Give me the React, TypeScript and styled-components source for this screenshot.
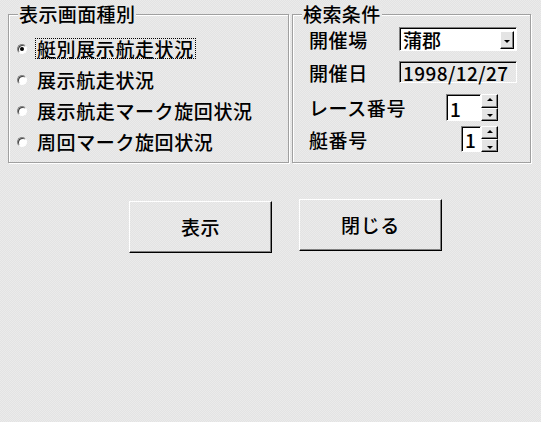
import styled, { createGlobalStyle, css } from 'styled-components';

/**
 * 展示航走状況 表示条件ダイアログ
 */
const GlobalStyle = createGlobalStyle`
  html, body {
    margin: 0;
    padding: 0;
  }

  body {
    font-family: "Noto Sans CJK JP", "DejaVu Sans", sans-serif;
    color: #000;
  }
`;

const bevelRaised = css`
  border: 1px solid;
  border-color: #fff #000 #000 #fff;
  box-shadow: inset -1px -1px 0 #808080;
`;

const bevelSunken = css`
  border: 1px solid;
  border-color: #808080 #fff #fff #808080;
  box-shadow: inset 1px 1px 0 #000;
`;

const DISPLAY_TYPES = ['艇別展示航走状況', '展示航走状況', '展示航走マーク旋回状況', '周回マーク旋回状況'];

const App = () => {
  return (
    <>
      <GlobalStyle />
      <Dialog>
        <TopRow>
          <GroupBox $width={281}>
            <GroupTitle>表示画面種別</GroupTitle>
            <RadioList>
              {DISPLAY_TYPES.map((label, i) => (
                <RadioRow key={label}>
                  <RadioMark $checked={i === 0} />
                  <RadioLabel $focused={i === 0}>{label}</RadioLabel>
                </RadioRow>
              ))}
            </RadioList>
          </GroupBox>

          <GroupBox $width={239}>
            <GroupTitle>検索条件</GroupTitle>
            <FieldList>
              <FieldRow $height={24} $gap={10}>
                <FieldLabel>開催場</FieldLabel>
                <ComboBox>
                  <ComboText>蒲郡</ComboText>
                  <ComboButton>
                    <ArrowDown />
                  </ComboButton>
                </ComboBox>
              </FieldRow>

              <FieldRow $height={22} $gap={11}>
                <FieldLabel>開催日</FieldLabel>
                <ReadOnlyField>1998/12/27</ReadOnlyField>
              </FieldRow>

              <FieldRow $height={27} $gap={5}>
                <FieldLabel>レース番号</FieldLabel>
                <Spinner>
                  <SpinText $width={35}>1</SpinText>
                  <SpinButtons>
                    <SpinButton>
                      <ArrowUp />
                    </SpinButton>
                    <SpinButton>
                      <ArrowDown />
                    </SpinButton>
                  </SpinButtons>
                </Spinner>
              </FieldRow>

              <FieldRow $height={26} $gap={0}>
                <FieldLabel>艇番号</FieldLabel>
                <Spinner>
                  <SpinText $width={20}>1</SpinText>
                  <SpinButtons>
                    <SpinButton>
                      <ArrowUp />
                    </SpinButton>
                    <SpinButton>
                      <ArrowDown />
                    </SpinButton>
                  </SpinButtons>
                </Spinner>
              </FieldRow>
            </FieldList>
          </GroupBox>
        </TopRow>

        <ButtonRow>
          <PushButton>表示</PushButton>
          <PushButton $offset={-2}>閉じる</PushButton>
        </ButtonRow>
      </Dialog>
    </>
  );
};

const Dialog = styled.div`
  width: 541px;
  height: 422px;
  box-sizing: border-box;
  padding: 14px 0 0 8px;
  background: repeating-conic-gradient(#e3e3e3 0 25%, #ebebeb 0 50%) 0 0 / 2px 2px;
  font-size: 19px;
  font-weight: 500;
  line-height: 1;
  overflow: hidden;
`;

const TopRow = styled.div`
  display: flex;
  gap: 3px;
`;

const GroupBox = styled.div<{ $width: number }>`
  position: relative;
  box-sizing: border-box;
  width: ${({ $width }) => $width}px;
  height: 149px;
  border: 1px solid #a0a0a0;
  box-shadow: inset 1px 1px 0 #fff, 1px 1px 0 #fff;
`;

const GroupTitle = styled.span`
  position: absolute;
  top: -11px;
  left: 9px;
  padding: 0 1px;
  background: #e8e8e8;
  letter-spacing: 0.4px;
`;

const RadioList = styled.div`
  display: flex;
  flex-direction: column;
  padding: 18px 0 0 8px;
`;

const RadioRow = styled.div`
  display: flex;
  align-items: center;
  height: 31px;
`;

const RadioMark = styled.span<{ $checked: boolean }>`
  position: relative;
  box-sizing: border-box;
  flex-shrink: 0;
  width: 10px;
  height: 10px;
  border-radius: 50%;
  border: 1px solid;
  border-color: #808080 #fff #fff #808080;
  background: #fff;
  box-shadow: inset 1px 1px 0 #404040;

  ${({ $checked }) =>
    $checked &&
    css`
      &::after {
        content: '';
        position: absolute;
        left: 2px;
        top: 2px;
        width: 4px;
        height: 4px;
        border-radius: 50%;
        background: #000;
      }
    `}
`;

const RadioLabel = styled.span<{ $focused: boolean }>`
  margin-left: 9px;
  padding: 0 1px;
  letter-spacing: 0.6px;
  outline: 1px dotted ${({ $focused }) => ($focused ? '#000' : 'transparent')};
  outline-offset: 0;
`;

const FieldList = styled.div`
  display: flex;
  flex-direction: column;
  padding: 12px 13px 0 16px;
`;

const FieldRow = styled.div<{ $height: number; $gap: number }>`
  display: flex;
  align-items: center;
  justify-content: space-between;
  height: ${({ $height }) => $height}px;
  margin-bottom: ${({ $gap }) => $gap}px;
`;

const FieldLabel = styled.span`
  letter-spacing: 0.6px;
`;

const ComboBox = styled.div`
  ${bevelSunken};
  box-sizing: border-box;
  display: flex;
  align-items: center;
  width: 118px;
  height: 24px;
  padding: 2px 2px 1px 3px;
  background: #fff;
`;

const ComboText = styled.span`
  flex: 1;
`;

const ComboButton = styled.span`
  ${bevelRaised};
  box-sizing: border-box;
  display: flex;
  align-items: center;
  justify-content: center;
  width: 14px;
  height: 18px;
  background: #e4e4e4;
`;

const ArrowDown = styled.span`
  width: 0;
  height: 0;
  margin-top: 3px;
  border-left: 3px solid transparent;
  border-right: 3px solid transparent;
  border-top: 3px solid #000;
`;

const ArrowUp = styled.span`
  width: 0;
  height: 0;
  margin-bottom: 2px;
  border-left: 3px solid transparent;
  border-right: 3px solid transparent;
  border-bottom: 3px solid #000;
`;

const ReadOnlyField = styled.div`
  ${bevelSunken};
  box-sizing: border-box;
  display: flex;
  align-items: center;
  width: 118px;
  height: 22px;
  padding: 1px 0 0 3px;
  font-size: 19px;
  letter-spacing: 0.4px;
`;

const Spinner = styled.div`
  display: flex;
  align-items: stretch;
  height: 100%;
  margin-right: 19px;
`;

const SpinText = styled.div<{ $width: number }>`
  ${bevelSunken};
  box-sizing: border-box;
  display: flex;
  align-items: center;
  width: ${({ $width }) => $width}px;
  padding: 1px 0 0 3px;
  background: #fff;
`;

const SpinButtons = styled.div`
  display: flex;
  flex-direction: column;
  width: 17px;
`;

const SpinButton = styled.span`
  ${bevelRaised};
  box-sizing: border-box;
  flex: 1;
  display: flex;
  align-items: center;
  justify-content: center;
  background: #e4e4e4;
`;

const ButtonRow = styled.div`
  display: flex;
  align-items: flex-start;
  gap: 27px;
  padding: 38px 0 0 121px;
`;

const PushButton = styled.button<{ $offset?: number }>`
  ${bevelRaised};
  box-sizing: border-box;
  width: 143px;
  height: 52px;
  margin-top: ${({ $offset = 0 }) => $offset}px;
  padding: 0 0 2px;
  background: transparent;
  font-family: inherit;
  font-size: 19px;
  font-weight: 500;
  letter-spacing: 0.6px;
  color: #000;
`;

export default App;
